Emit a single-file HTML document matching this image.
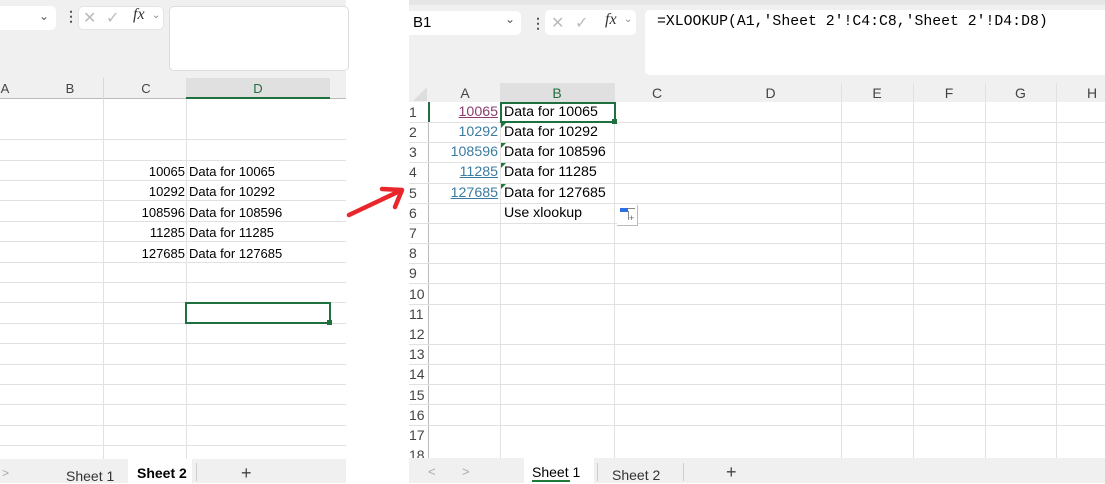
<!DOCTYPE html>
<html><head><meta charset="utf-8"><style>
*{margin:0;padding:0;box-sizing:border-box}
body{width:1105px;height:483px;background:#fff;position:relative;overflow:hidden;font-family:"Liberation Sans",sans-serif;font-size:13px;color:#000}
.a{position:absolute}
.hl{position:absolute;height:1px;background:#e1e1e1}
.vl{position:absolute;width:1px;background:#e1e1e1}
.ch{position:absolute;font-size:13px;color:#444;text-align:center}
.rn{position:absolute;left:409px;font-size:14px;color:#444}
.num{position:absolute;text-align:right;font-size:13px}
.r{font-size:14.2px}
.tri{position:absolute;width:0;height:0;border-top:5px solid #1f7a3a;border-right:5px solid transparent}
</style></head><body>

<!-- LEFT PANEL -->
<div class="a" style="left:0;top:0;width:346px;height:78px;background:#f0f0f0"></div>
<div class="a" style="left:0;top:6px;width:56px;height:24px;background:#fff;border-radius:0 5px 5px 0"></div>
<div class="a" style="left:39px;top:9px;font-size:12px;color:#555">&#8964;</div>
<div class="a" style="left:64px;top:8px;font-size:14px;color:#555;font-weight:bold">&#8942;</div>
<div class="a" style="left:78px;top:6px;width:86px;height:24px;background:#fff;border:1px solid #e4e4e4;border-radius:5px"></div>
<div class="a" style="left:83px;top:8px;font-size:16px;color:#bbb">&#10005;</div>
<div class="a" style="left:106px;top:8px;font-size:16px;color:#bbb">&#10003;</div>
<div class="a" style="left:133px;top:6px;font-size:16px;font-style:italic;font-family:'Liberation Serif',serif;color:#333">fx</div>
<div class="a" style="left:152px;top:10px;font-size:10px;color:#888">&#8964;</div>
<div class="a" style="left:169px;top:6px;width:180px;height:65px;background:#fff;border:1px solid #ddd;border-radius:5px"></div>
<div class="a" style="left:0;top:78px;width:346px;height:21px;background:#f0f0f0;border-bottom:1px solid #bbb"></div>
<div class="a" style="left:186px;top:78px;width:144px;height:21px;background:#e0e0e0;border-bottom:2px solid #1f6f3f"></div>
<div class="vl" style="left:103px;top:78px;height:21px;background:#d8d8d8"></div>
<div class="ch" style="left:0;top:81px;width:10px">A</div>
<div class="ch" style="left:62px;top:81px;width:16px">B</div>
<div class="ch" style="left:138px;top:81px;width:16px">C</div>
<div class="ch" style="left:250px;top:81px;width:16px;color:#1f6f3f">D</div>
<div class="vl" style="left:103px;top:99px;height:360px"></div>
<div class="vl" style="left:186px;top:99px;height:360px"></div>
<div class="hl" style="left:0;top:139px;width:346px"></div>
<div class="hl" style="left:0;top:160px;width:346px"></div>
<div class="hl" style="left:0;top:180px;width:346px"></div>
<div class="hl" style="left:0;top:200px;width:346px"></div>
<div class="hl" style="left:0;top:221px;width:346px"></div>
<div class="hl" style="left:0;top:241px;width:346px"></div>
<div class="hl" style="left:0;top:262px;width:346px"></div>
<div class="hl" style="left:0;top:282px;width:346px"></div>
<div class="hl" style="left:0;top:302px;width:346px"></div>
<div class="hl" style="left:0;top:323px;width:346px"></div>
<div class="hl" style="left:0;top:343px;width:346px"></div>
<div class="hl" style="left:0;top:364px;width:346px"></div>
<div class="hl" style="left:0;top:384px;width:346px"></div>
<div class="hl" style="left:0;top:404px;width:346px"></div>
<div class="hl" style="left:0;top:425px;width:346px"></div>
<div class="hl" style="left:0;top:445px;width:346px"></div>
<div class="num" style="left:103px;width:82px;top:164px">10065</div>
<div class="num" style="left:103px;width:82px;top:184px">10292</div>
<div class="num" style="left:103px;width:82px;top:205px">108596</div>
<div class="num" style="left:103px;width:82px;top:225px">11285</div>
<div class="num" style="left:103px;width:82px;top:246px">127685</div>
<div class="a" style="left:189px;top:164px">Data for 10065</div>
<div class="a" style="left:189px;top:184px">Data for 10292</div>
<div class="a" style="left:189px;top:205px">Data for 108596</div>
<div class="a" style="left:189px;top:225px">Data for 11285</div>
<div class="a" style="left:189px;top:246px">Data for 127685</div>
<div class="a" style="left:185px;top:302px;width:146px;height:22px;border:2px solid #1f6f3f"></div>
<div class="a" style="left:327px;top:320px;width:5px;height:5px;background:#1f6f3f"></div>
<div class="a" style="left:0;top:459px;width:346px;height:24px;background:#f0f0f0"></div>
<div class="a" style="left:128px;top:459px;width:64px;height:24px;background:#fff"></div>
<div class="a" style="left:2px;top:466px;color:#aaa;font-size:12px">&gt;</div>
<div class="a" style="left:66px;top:468px;color:#333;font-size:14px">Sheet 1</div>
<div class="a" style="left:137px;top:465px;font-weight:bold;font-size:14px">Sheet 2</div>
<div class="vl" style="left:196px;top:463px;height:18px;background:#ccc"></div>
<div class="a" style="left:241px;top:463px;font-size:18px;color:#444">+</div>

<!-- red arrow -->
<svg class="a" style="left:340px;top:170px" width="70" height="55" viewBox="0 0 70 55">
<path d="M9 45 L62 20 M42 19 L62 20 L55 37" stroke="#e8262b" stroke-width="4.5" fill="none" stroke-linecap="round" stroke-linejoin="round"/>
</svg>

<!-- RIGHT PANEL -->
<div class="a" style="left:409px;top:0;width:696px;height:83px;background:#f0f0f0"></div>
<div class="a" style="left:409px;top:0;width:696px;height:5px;background:#e6e6e6"></div>
<div class="a" style="left:409px;top:11px;width:112px;height:24px;background:#fff;border-radius:0 5px 5px 0"></div>
<div class="a" style="left:413px;top:14px;font-size:15px">B1</div>
<div class="a" style="left:505px;top:12px;font-size:12px;color:#555">&#8964;</div>
<div class="a" style="left:531px;top:15px;font-size:14px;color:#555;font-weight:bold">&#8942;</div>
<div class="a" style="left:545px;top:10px;width:91px;height:25px;background:#fff;border-radius:5px"></div>
<div class="a" style="left:551px;top:13px;font-size:16px;color:#bbb">&#10005;</div>
<div class="a" style="left:575px;top:13px;font-size:16px;color:#bbb">&#10003;</div>
<div class="a" style="left:605px;top:11px;font-size:16px;font-style:italic;font-family:'Liberation Serif',serif;color:#333">fx</div>
<div class="a" style="left:624px;top:14px;font-size:10px;color:#888">&#8964;</div>
<div class="a" style="left:645px;top:10px;width:470px;height:65px;background:#fff;border-radius:5px"></div>
<div class="a" style="left:657px;top:14px;font-family:'Liberation Mono',monospace;font-size:14.8px">=XLOOKUP(A1,'Sheet 2'!C4:C8,'Sheet 2'!D4:D8)</div>
<div class="a" style="left:409px;top:83px;width:696px;height:19px;background:#f0f0f0"></div>
<div class="a" style="left:500px;top:83px;width:114px;height:19px;background:#e0e0e0"></div>
<svg class="a" style="left:412px;top:86px" width="16" height="16"><path d="M15 1 L15 15 L1 15 Z" fill="#ddd"/></svg>
<div class="ch" style="left:430px;top:85px;width:70px;font-size:14px">A</div>
<div class="ch" style="left:500px;top:85px;width:114px;color:#1f6f3f;font-size:14px">B</div>
<div class="ch" style="left:614px;top:85px;width:86px;font-size:14px">C</div>
<div class="ch" style="left:700px;top:85px;width:141px;font-size:14px">D</div>
<div class="ch" style="left:841px;top:85px;width:72px;font-size:14px">E</div>
<div class="ch" style="left:913px;top:85px;width:72px;font-size:14px">F</div>
<div class="ch" style="left:985px;top:85px;width:71px;font-size:14px">G</div>
<div class="ch" style="left:1056px;top:85px;width:72px;font-size:14px">H</div>
<div class="vl" style="left:428px;top:102px;height:356px;background:#bbb"></div>
<div class="vl" style="left:500px;top:83px;height:375px"></div>
<div class="vl" style="left:614px;top:83px;height:375px"></div>
<div class="vl" style="left:841px;top:83px;height:375px"></div>
<div class="vl" style="left:913px;top:83px;height:375px"></div>
<div class="vl" style="left:985px;top:83px;height:375px"></div>
<div class="vl" style="left:1056px;top:83px;height:375px"></div>
<div class="a" style="left:428px;top:102px;width:2px;height:20px;background:#1f6f3f"></div>

<div class="hl" style="left:409px;top:122px;width:696px"></div>
<div class="hl" style="left:409px;top:142px;width:696px"></div>
<div class="hl" style="left:409px;top:162px;width:696px"></div>
<div class="hl" style="left:409px;top:183px;width:696px"></div>
<div class="hl" style="left:409px;top:203px;width:696px"></div>
<div class="hl" style="left:409px;top:223px;width:696px"></div>
<div class="hl" style="left:409px;top:243px;width:696px"></div>
<div class="hl" style="left:409px;top:263px;width:696px"></div>
<div class="hl" style="left:409px;top:283px;width:696px"></div>
<div class="hl" style="left:409px;top:304px;width:696px"></div>
<div class="hl" style="left:409px;top:344px;width:696px"></div>
<div class="hl" style="left:409px;top:364px;width:696px"></div>
<div class="hl" style="left:409px;top:384px;width:696px"></div>
<div class="hl" style="left:409px;top:404px;width:696px"></div>
<div class="hl" style="left:409px;top:425px;width:696px"></div>

<div class="rn" style="top:104px">1</div>
<div class="rn" style="top:124px">2</div>
<div class="rn" style="top:144px">3</div>
<div class="rn" style="top:164px">4</div>
<div class="rn" style="top:185px">5</div>
<div class="rn" style="top:205px">6</div>
<div class="rn" style="top:225px">7</div>
<div class="rn" style="top:245px">8</div>
<div class="rn" style="top:265px">9</div>
<div class="rn" style="top:286px">10</div>
<div class="rn" style="top:306px">11</div>
<div class="rn" style="top:326px">12</div>
<div class="rn" style="top:346px">13</div>
<div class="rn" style="top:366px">14</div>
<div class="rn" style="top:387px">15</div>
<div class="rn" style="top:407px">16</div>
<div class="rn" style="top:427px">17</div>
<div class="rn" style="top:447px">18</div>

<div class="num r" style="left:428px;width:70px;top:104px;color:#8a3d6e;text-decoration:underline">10065</div>
<div class="num r" style="left:428px;width:70px;top:124px;color:#3a7ca0">10292</div>
<div class="num r" style="left:428px;width:70px;top:144px;color:#3a7ca0">108596</div>
<div class="num r" style="left:428px;width:70px;top:164px;color:#3a7ca0;text-decoration:underline">11285</div>
<div class="num r" style="left:428px;width:70px;top:185px;color:#3a7ca0;text-decoration:underline">127685</div>
<div class="a r" style="left:504px;top:104px">Data for 10065</div>
<div class="a r" style="left:504px;top:124px">Data for 10292</div>
<div class="a r" style="left:504px;top:144px">Data for 108596</div>
<div class="a r" style="left:504px;top:164px">Data for 11285</div>
<div class="a r" style="left:504px;top:185px">Data for 127685</div>
<div class="a r" style="left:504px;top:205px">Use xlookup</div>
<div class="tri" style="left:501px;top:123px"></div>
<div class="tri" style="left:501px;top:143px"></div>
<div class="tri" style="left:501px;top:163px"></div>
<div class="tri" style="left:501px;top:184px"></div>
<div class="a" style="left:500px;top:102px;width:116px;height:21px;border:2px solid #1f6f3f"></div>
<div class="a" style="left:612px;top:119px;width:5px;height:5px;background:#1f6f3f"></div>
<div class="a" style="left:617px;top:205px;width:21px;height:21px;background:#fff;border-right:1px solid #bbb;border-bottom:1px solid #bbb"></div>
<div class="a" style="left:620px;top:208px;width:8px;height:4px;background:#2f6fe0"></div>
<div class="a" style="left:628px;top:208px;width:7px;height:1px;background:#888"></div>
<div class="a" style="left:628px;top:211px;width:1px;height:9px;background:#888"></div>
<div class="a" style="left:629px;top:213px;font-size:9px;color:#666">+</div>

<div class="a" style="left:409px;top:458px;width:696px;height:25px;background:#f0f0f0"></div>
<div class="a" style="left:524px;top:458px;width:70px;height:25px;background:#fff"></div>
<div class="a" style="left:428px;top:464px;color:#aaa;font-size:13px">&lt;</div>
<div class="a" style="left:462px;top:464px;color:#aaa;font-size:13px">&gt;</div>
<div class="a" style="left:532px;top:464px;font-size:14px">Sheet 1</div>
<div class="a" style="left:532px;top:480px;width:38px;height:2px;background:#1f7a3a"></div>
<div class="vl" style="left:597px;top:463px;height:18px;background:#ccc"></div>
<div class="a" style="left:612px;top:467px;font-size:14px;color:#333">Sheet 2</div>
<div class="vl" style="left:683px;top:463px;height:18px;background:#ccc"></div>
<div class="a" style="left:726px;top:462px;font-size:18px;color:#444">+</div>
</body></html>
